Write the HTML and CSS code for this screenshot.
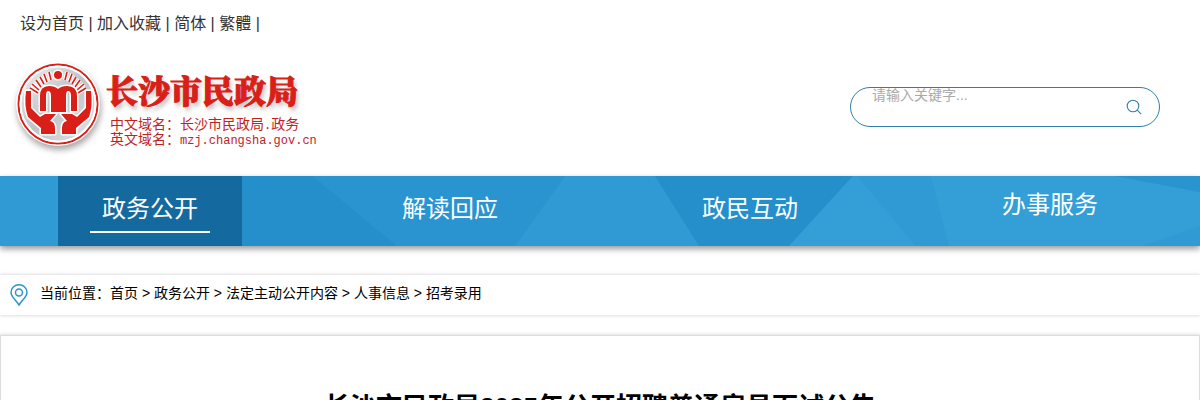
FILE: index.html
```html
<!DOCTYPE html>
<html lang="zh-CN">

<head>
  <meta charset="utf-8">
  <title>长沙市民政局2025年公开招聘普通雇员面试公告</title>
  <meta name="viewport" content="width=device-width, initial-scale=1.0">
  <link rel="stylesheet" href="styles.css">
</head>

<body>
  <div class="top-links">
    <a href="#">设为首页</a> | <a href="#">加入收藏</a> | <a href="#">简体</a> | <a href="#">繁體</a> |
  </div>
  <header class="header">
    <a class="logo" href="#">
      <svg class="emblem" viewBox="0 0 84 84" width="84" height="84">
        <defs>
          <linearGradient id="silver" x1="0" y1="0" x2="1" y2="1">
            <stop offset="0" stop-color="#eef0f1" />
            <stop offset="0.5" stop-color="#bfc3c6" />
            <stop offset="1" stop-color="#e4e6e8" />
          </linearGradient>
        </defs>
        <circle cx="42" cy="42" r="42" fill="#fff" />
        <circle cx="42" cy="42" r="38" fill="url(#silver)" />
        <circle cx="42" cy="42" r="39.500" fill="none" stroke="#d91f17" stroke-width="2" />
        <circle cx="42" cy="42" r="37.500" fill="none" stroke="#fff" stroke-width="2" />
        <!-- rays -->
        <g stroke="#fff" stroke-width="4">
          <path d="M14 26l8 5M16 22l7 6M20 18l5 7M24 15l4 7M28 12l3 8M33 10l2 8M51 10l-2 8M56 12l-3 8M60 15l-4 7M64 18l-5 7M68 22l-7 6M70 26l-8 5" />
        </g>
        <g stroke="#d91f17" stroke-width="1.6">
          <path d="M14 26l8 5M16 22l7 6M20 18l5 7M24 15l4 7M28 12l3 8M33 10l2 8M51 10l-2 8M56 12l-3 8M60 15l-4 7M64 18l-5 7M68 22l-7 6M70 26l-8 5" />
        </g>
        <g fill="#d91f17" stroke="#fff" stroke-width="3" paint-order="stroke" stroke-linejoin="round">
          <circle cx="42" cy="13" r="4" />
          <!-- arch -->
          <path d="M24 49V34Q24 24 33 24Q39 24 42 27Q45 24 51 24Q61 24 61 34V49H55V34Q55 29 52 29Q50 29 50 34V50H35V34Q35 29 32 29Q30 29 30 34V49Z" />
          <!-- hands -->
          <path d="M10 29H15V46L24 55L29 52H40L34 59Q39 60 39 66V72H25V66L12 55Q8 44 10 29Z" />
          <path d="M75 29H70V46L61 55L56 52H45L51 59Q46 60 46 66V72H60V66L73 55Q77 44 75 29Z" />
        </g>
      </svg>
      <span class="logo-text">
        <strong class="logo-name">长沙市民政局</strong>
        <span class="logo-domain">中文域名：长沙市民政局<span class="latin">.</span>政务</span>
        <span class="logo-domain">英文域名：<span class="latin">mzj.changsha.gov.cn</span></span>
      </span>
    </a>
    <form class="search">
      <input class="search-input" type="text" placeholder="请输入关键字..." aria-label="请输入关键字">
      <button class="search-btn" type="button" aria-label="搜索">
        <svg viewBox="0 0 16 16" width="16" height="16" fill="none" stroke="#2f7fae" stroke-width="1.1">
          <circle cx="7" cy="7" r="5.8" />
          <path d="M11.2 11.2L15.2 15.2" />
        </svg>
      </button>
    </form>
  </header>
  <nav class="nav">
    <svg class="nav-bg" viewBox="0 0 1200 70" preserveAspectRatio="none">
      <path fill="#2f9ad3" d="M0 0H1200V70H0Z" />
      <path fill="#258fcb" d="M150 0H313L397 70H150Z" />
      <path fill="#2994cf" d="M313 0H565L515 70H397Z" />
      <path fill="#258fcb" d="M655 0H853L789 70H699Z" />
      <path fill="#349fd6" d="M853 0H857L916 70H789Z" />
      <path fill="#349fd6" d="M931 0H1115L1200 16V50L1142 70H949Z" />
      <path fill="#2994cf" d="M1115 0H1200V16Z" />
    </svg>
    <ul class="nav-list">
      <li><a class="nav-link has-menu active" href="#">政务公开</a></li>
      <li><a class="nav-link has-menu" href="#">解读回应</a></li>
      <li><a class="nav-link has-menu" href="#">政民互动</a></li>
      <li><a class="nav-link" href="#">办事服务</a></li>
    </ul>
  </nav>
  <div class="position">
    <svg viewBox="0 0 18 22" width="18" height="22" fill="none" stroke="#2d93c8" stroke-width="1.5">
      <path d="M9 21C6 16 1 13 1 8.500A8 7.700 0 0 1 17 8.500C17 13 12 16 9 21Z" />
      <circle cx="9" cy="8.500" r="3.500" />
    </svg>
    <p>当前位置：<a href="#">首页</a> &gt; <a href="#">政务公开</a> &gt; <a href="#">法定主动公开内容</a> &gt; <a href="#">人事信息</a> &gt; <a href="#">招考录用</a></p>
  </div>
  <main class="article">
    <h1>长沙市民政局2025年公开招聘普通雇员面试公告</h1>
  </main>
</body>

</html>
```
FILE: styles.css
```css
* {
  margin: 0;
  padding: 0;
  box-sizing: border-box;
}

body {
  font-family: "Liberation Sans", "Noto Sans CJK SC", sans-serif;
  font-size: 14px;
  color: #000;
  background: #fff;
}

a {
  color: inherit;
  text-decoration: none;
}

ul {
  list-style: none;
}

.top-links {
  padding: 0 20px;
  font-size: 16px;
  line-height: 47px;
  color: #333;
}

.header {
  display: flex;
  justify-content: space-between;
  align-items: flex-start;
  height: 129px;
  padding: 15px 40px 0 16px;
}

.logo {
  display: flex;
  gap: 6px;
  color: #d91f17;
}

.emblem {
  filter: drop-shadow(1px 4px 3px rgba(0, 0, 0, 0.35));
}

.logo-text {
  display: flex;
  flex-direction: column;
  padding-top: 9px;
}

.logo-name {
  font-family: "Noto Serif CJK SC", "Noto Sans CJK SC", serif;
  font-size: 32px;
  font-weight: 900;
  line-height: 36px;
  margin-bottom: 10px;
  -webkit-text-stroke: 1px #d91f17;
  text-shadow: 2px 4px 4px rgba(0, 0, 0, 0.25);
}

.logo-domain {
  padding-left: 4px;
  font-size: 14px;
  line-height: 15px;
  color: #c0231d;
}

.logo-domain .latin {
  font-family: "Liberation Mono", monospace;
  font-size: 12px;
  line-height: 12px;
}

.search {
  display: flex;
  width: 310px;
  height: 40px;
  margin-top: 25px;
  border: 1px solid #2f7fae;
  border-radius: 20px;
  overflow: hidden;
}

.search-input {
  flex: 1;
  min-width: 0;
  height: 14px;
  padding-left: 21px;
  border: 0;
  outline: 0;
  background: none;
  font-family: inherit;
  font-size: 14px;
}

.search-input::placeholder {
  color: #a9a9a9;
}

.search-btn {
  display: flex;
  align-items: center;
  justify-content: center;
  width: 50px;
  border: 0;
  background: none;
  cursor: pointer;
}

.nav {
  position: relative;
  height: 70px;
  box-shadow: 0 3px 6px rgba(0, 0, 0, 0.4);
}

.nav-bg {
  position: absolute;
  width: 100%;
  height: 100%;
}

.nav-list {
  position: relative;
  display: flex;
}

.nav-list li {
  flex: 1;
  display: flex;
  justify-content: center;
}

.nav-link {
  width: 184px;
  height: 70px;
  font-size: 24px;
  line-height: 58px;
  color: #fff;
  text-align: center;
}

.nav-link.has-menu {
  line-height: 65px;
}

.nav-link.active {
  position: relative;
  background: #14699e;
}

.nav-link.active::after {
  content: "";
  position: absolute;
  left: 32px;
  right: 32px;
  bottom: 13px;
  height: 2px;
  background: #fff;
}

.position {
  display: flex;
  gap: 12px;
  height: 40px;
  margin-top: 29px;
  padding: 9px 10px 0;
  box-shadow: 0 0 4px rgba(0, 0, 0, 0.2);
}

.position p {
  line-height: 18px;
}

.article {
  margin-top: 20px;
  padding: 51px 20px;
  border: 1px solid #ddd;
  box-shadow: 0 0 4px rgba(0, 0, 0, 0.2);
}

.article h1 {
  font-size: 26px;
  line-height: 40px;
  text-align: center;
}
```
